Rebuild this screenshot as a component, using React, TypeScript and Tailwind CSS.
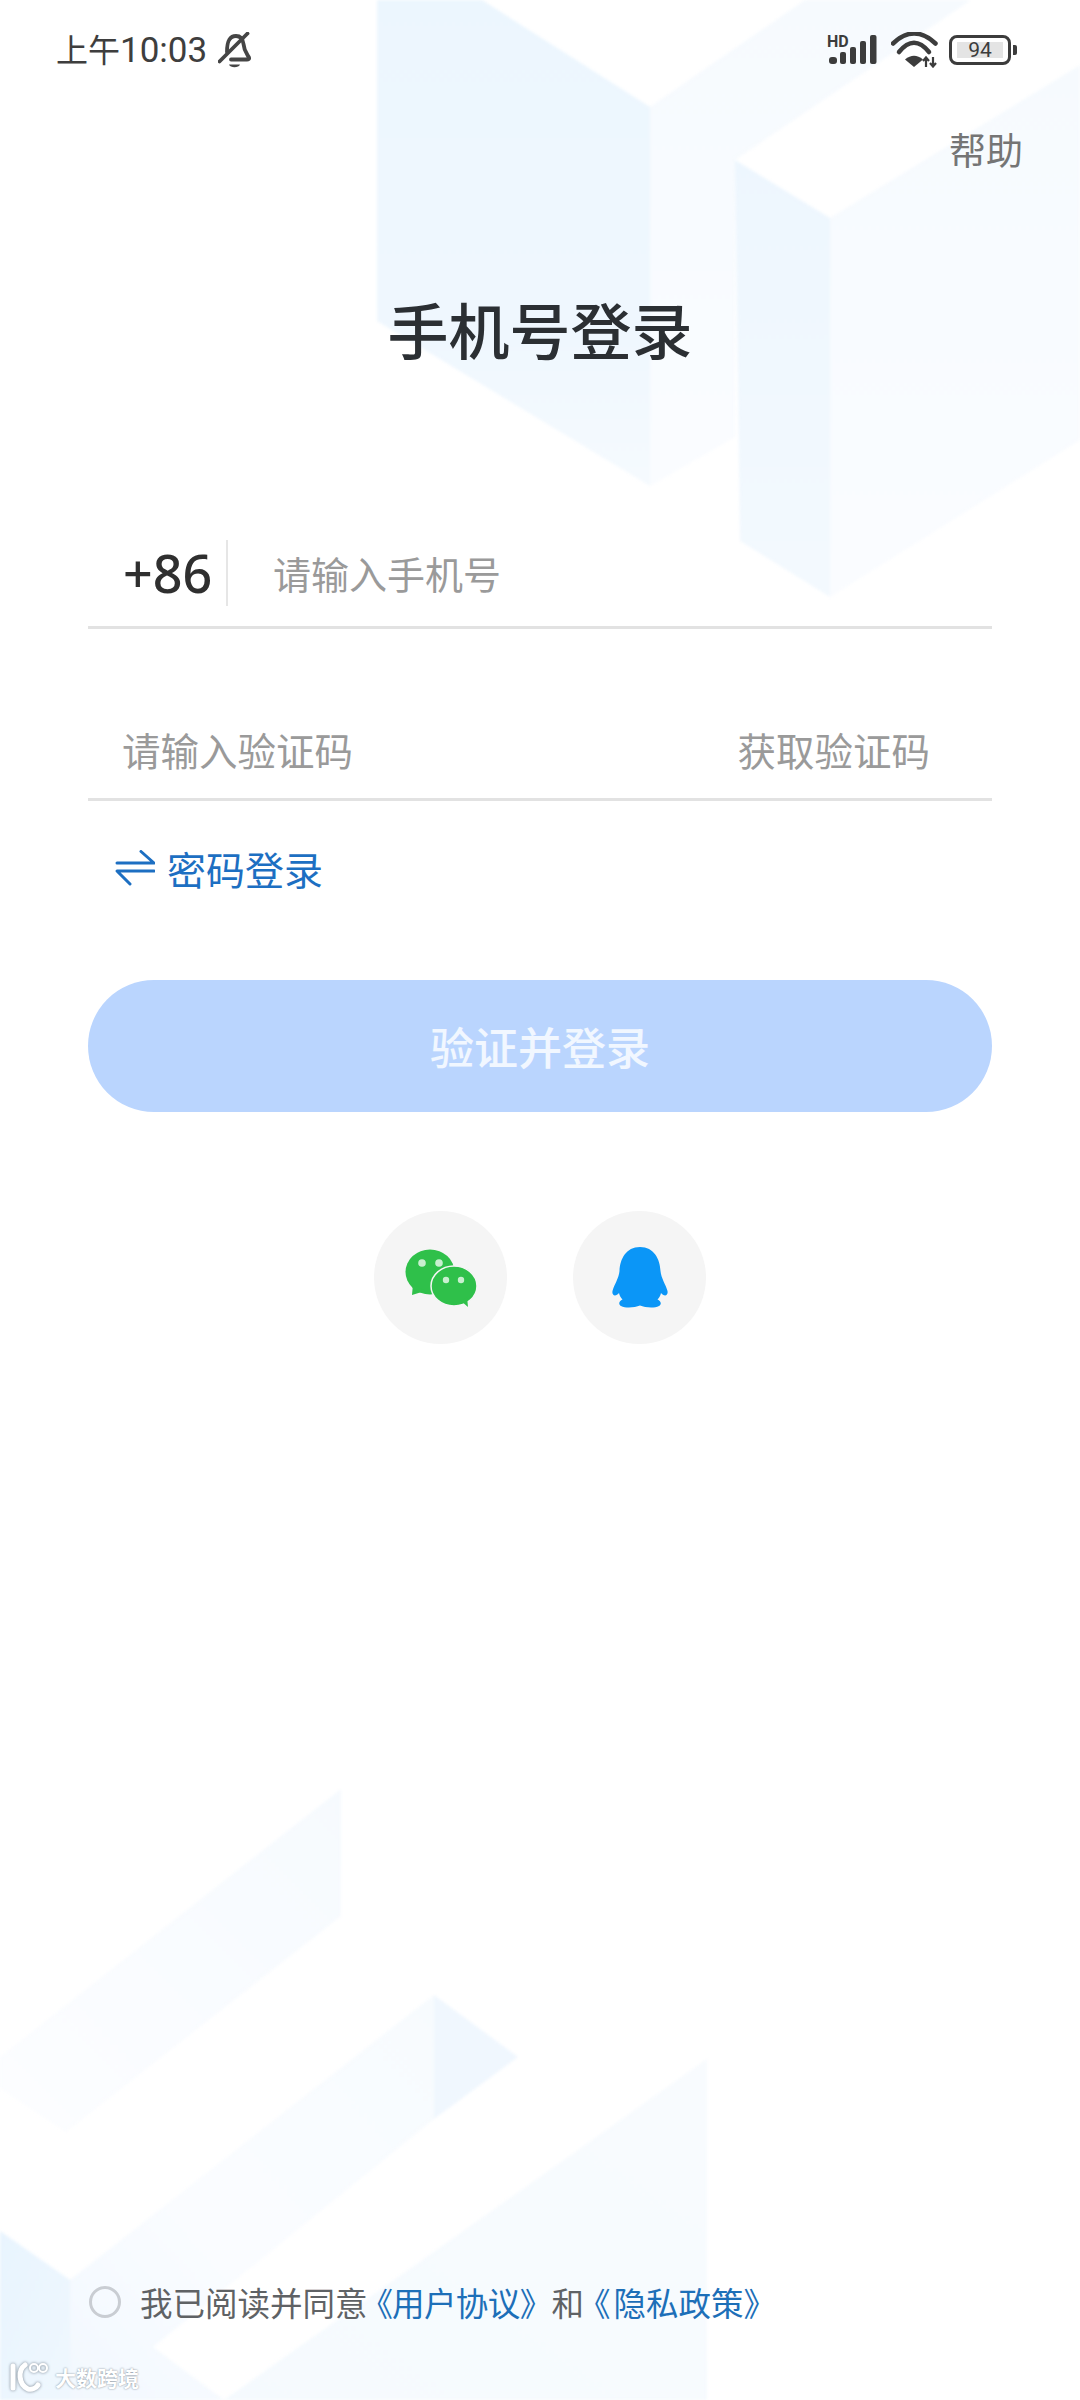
const cjk = "font-['Noto_Sans_CJK_SC','Noto_Sans',sans-serif]";

function Background() {
  return (
    <svg className="absolute inset-0 blur-[1.5px]" width="1080" height="2400" viewBox="0 0 1080 2400">
      <defs>
        <linearGradient id="bigLeft" x1="0" y1="0" x2="0" y2="1">
          <stop offset="0" stopColor="#ecf6fe" />
          <stop offset="0.7" stopColor="#eff7fe" />
          <stop offset="1" stopColor="#f5fafe" />
        </linearGradient>
        <linearGradient id="rightFace" x1="0" y1="0" x2="0" y2="1">
          <stop offset="0" stopColor="#f6fafe" />
          <stop offset="1" stopColor="#fafcff" />
        </linearGradient>
        <linearGradient id="cubeLeft" x1="0" y1="0" x2="0" y2="1">
          <stop offset="0" stopColor="#edf6fe" />
          <stop offset="1" stopColor="#f3f9fe" />
        </linearGradient>
        <linearGradient id="bottomA" x1="1" y1="0" x2="0" y2="1">
          <stop offset="0" stopColor="#f6fafe" />
          <stop offset="1" stopColor="#fcfdff" />
        </linearGradient>
        <linearGradient id="band" x1="1" y1="0" x2="0" y2="1">
          <stop offset="0" stopColor="#f7fbfe" />
          <stop offset="0.6" stopColor="#fafcff" />
          <stop offset="1" stopColor="#f2f8fe" />
        </linearGradient>
        <linearGradient id="bottomC" x1="0" y1="1" x2="1" y2="0">
          <stop offset="0" stopColor="#f5fafe" />
          <stop offset="1" stopColor="#f8fbfe" />
        </linearGradient>
        <linearGradient id="corner" x1="0" y1="0" x2="1" y2="1">
          <stop offset="0" stopColor="#e8f4fe" />
          <stop offset="1" stopColor="#eff7fe" />
        </linearGradient>
      </defs>
      {/* top cubes */}
      <polygon points="650,107 805,0 971,0 735,160 735,437 650,486" fill="url(#rightFace)" />
      <polygon points="377,0 482,0 650,107 650,486 377,321" fill="url(#bigLeft)" />
      <polygon points="830,218 1080,65 1080,440 830,597" fill="url(#rightFace)" />
      <polygon points="735,160 830,218 830,597 740,541" fill="url(#cubeLeft)" />
      {/* bottom cubes */}
      <polygon points="341,1789 341,1916 66,2132 0,2088 0,2057" fill="url(#bottomA)" />
      <polygon points="434,1995 434,2119 153,2347 224,2400 70,2400 70,2280" fill="url(#band)" />
      <polygon points="434,1995 518,2057 434,2119" fill="#f0f7fe" />
      <polygon points="0,2231 70,2280 70,2400 0,2400" fill="url(#corner)" />
      <polygon points="707,2059 707,2400 224,2400" fill="url(#bottomC)" />
    </svg>
  );
}

function BellOff() {
  return (
    <svg width="33" height="36" viewBox="0 0 33 36" fill="none" stroke="#454545" strokeWidth="3.800" strokeLinecap="round">
      <path d="M9 20C9 12 10 4 18 4C23 4 25 8 25.500 12C26 19 29 22 31 25.500C31.500 27 30.500 27.500 29 27.500H13" />
      <path d="M1.500 29.500L29.500 1.500" />
      <path d="M11 32.500H22C21 36 12 36 11 32.500Z" fill="#454545" stroke="none" />
    </svg>
  );
}

function Signal() {
  return (
    <svg width="54" height="34" viewBox="0 0 54 34" fill="#3c3c3c">
      <text x="0" y="14" fontSize="16" fontWeight="700" fontFamily="Roboto, sans-serif">HD</text>
      <rect x="2" y="24" width="8" height="7" rx="3" />
      <rect x="13" y="19" width="6" height="12" rx="2" />
      <rect x="23" y="14" width="6" height="17" rx="2" />
      <rect x="33" y="8" width="6" height="23" rx="2" />
      <rect x="43" y="2" width="6.500" height="29" rx="2" />
    </svg>
  );
}

function Wifi() {
  return (
    <svg width="48" height="36" viewBox="0 0 48 36" fill="none" stroke="#3c3c3c" strokeWidth="4.500" strokeLinecap="round">
      <path d="M2 11.500Q23 -8.500 44.500 11.500" />
      <path d="M8 20Q23 1.500 38 20" />
      <path d="M14 27.500Q23 20 32 27.500L23 35Z" fill="#3c3c3c" stroke="none" />
      <g strokeWidth="2.200" strokeLinecap="butt">
        <path d="M35 35V26M32 29L35 25.500L38 29" />
        <path d="M42 25V34M39 31L42 34.500L45 31" />
      </g>
    </svg>
  );
}

function Battery() {
  return (
    <div className="flex items-center gap-[2px]">
      <div className="flex h-[30px] w-[62px] items-center justify-center rounded-[8px] border-[3.500px] border-[#3c3c3c]">
        <div className="flex h-[16px] w-[46px] items-center justify-center bg-[#e4e4e4] font-['Roboto',sans-serif] text-[21px] leading-none text-[#3c3c3c]">
          94
        </div>
      </div>
      <div className="h-[10px] w-[4px] rounded-r-[2px] bg-[#3c3c3c]" />
    </div>
  );
}

function SwapArrows() {
  return (
    <svg width="40" height="36" viewBox="0 0 40 36" fill="none" stroke="#1d6fc2" strokeWidth="3" strokeLinecap="round" strokeLinejoin="round">
      <path d="M2 13H39L26 1.500" />
      <path d="M39 21H2L15 34" />
    </svg>
  );
}

function WeChat() {
  return (
    <svg width="72" height="58" viewBox="0 0 72 58">
      <ellipse cx="25" cy="23" rx="24.500" ry="22.500" fill="#2fc04a" />
      <path d="M8 35L7 46L20 42Z" fill="#2fc04a" />
      <ellipse cx="49" cy="37" rx="23" ry="20" fill="#2fc04a" stroke="#f5f5f5" strokeWidth="1.500" />
      <path d="M56 52L63 58L62 48Z" fill="#2fc04a" />
      <circle cx="17" cy="14" r="3.800" fill="#c9efd0" />
      <circle cx="34" cy="14" r="3.800" fill="#c9efd0" />
      <circle cx="41" cy="31" r="3.200" fill="#c9efd0" />
      <circle cx="56" cy="31" r="3.200" fill="#c9efd0" />
    </svg>
  );
}

function Penguin() {
  return (
    <svg width="56" height="61" viewBox="0 0 56 61" fill="#0b96f7">
      <path d="M28 0C42 0 48 12 48.500 24C49 31 54 38 55.500 44C56.500 49 52 50 49 46C48.500 49 47 51 45.500 52.500C49 54 50 57 47 59C42 61.500 33 60.500 28 58.500C23 60.500 14 61.500 9 59C6 57 7 54 10.500 52.500C9 51 7.500 49 7 46C4 50 -0.500 49 0.500 44C2 38 7 31 7.500 24C8 12 14 0 28 0Z" />
    </svg>
  );
}

function SocialButton({ children }: { children: React.ReactNode }) {
  return (
    <button className="flex h-[133px] w-[133px] items-center justify-center rounded-full bg-[#f5f5f5]">
      {children}
    </button>
  );
}

function WatermarkLogo() {
  return (
    <svg className="drop-shadow-[0_0_1.5px_#76828e]" width="40" height="34" viewBox="0 0 40 34" fill="none" stroke="#ffffff" strokeLinecap="round">
      <path d="M3 6V28" strokeWidth="5" />
      <path d="M15 5C8 10 8 24 18 29C22 30 26 28 28 25" strokeWidth="5" />
      <circle cx="24" cy="8" r="4" strokeWidth="2" />
      <circle cx="33" cy="8" r="4" strokeWidth="2" />
    </svg>
  );
}

export default function App() {
  return (
    <div className={`relative flex h-[2400px] w-[1080px] flex-col overflow-hidden bg-white ${cjk}`}>
      <Background />

      <div className="relative flex h-[100px] items-center justify-between pl-[56px] pr-[63px]">
        <div className="flex items-center gap-[11px]">
          <span className="text-[32px] leading-none text-[#3e3e3e]">
            上午<span className="font-['Roboto',sans-serif] text-[35px]">10:03</span>
          </span>
          <BellOff />
        </div>
        <div className="flex items-center gap-[10px]">
          <Signal />
          <Wifi />
          <Battery />
        </div>
      </div>

      <div className="relative mt-[29px] flex h-[40px] items-center justify-end pr-[57px] text-[37px] leading-none text-[#757575]">
        帮助
      </div>

      <h1 className="relative mt-[120px] h-[80px] text-center text-[61px] font-medium leading-[80px] text-[#2b2f33]">
        手机号登录
      </h1>

      <div className="relative mt-[150px] flex flex-col px-[88px]">
        <div className="flex h-[110px] items-center border-b-[3px] border-[#e2e2e2] pl-[35px]">
          <span className="w-[103px] font-['Noto_Sans',sans-serif] text-[52px] font-medium leading-none text-[#2f2f2f]">
            +86
          </span>
          <div className="h-[66px] w-[2px] bg-[#e6e6e6]" />
          <span className="ml-[45px] text-[38px] leading-none text-[#9a9a9a]">请输入手机号</span>
        </div>

        <div className="mt-[72px] flex h-[100px] items-center justify-between border-b-[3px] border-[#e2e2e2] pl-[34px] pr-[62px] text-[38.500px] leading-none text-[#9a9a9a]">
          <span>请输入验证码</span>
          <span>获取验证码</span>
        </div>

        <div className="mt-[42px] flex h-[50px] items-center gap-[12px] pl-[27px] text-[39px] leading-none text-[#1d6fc2]">
          <SwapArrows />
          <span>密码登录</span>
        </div>

        <button className="mt-[87px] flex h-[132px] w-full items-center justify-center rounded-full bg-[#bad5fe] text-[44px] font-medium leading-none text-white/80">
          验证并登录
        </button>

        <div className="mt-[99px] flex justify-center gap-[66px]">
          <SocialButton>
            <WeChat />
          </SocialButton>
          <SocialButton>
            <Penguin />
          </SocialButton>
        </div>
      </div>

      <div className="relative mt-auto mb-[78px] flex h-[40px] items-center pl-[89px] text-[32.500px] leading-none text-[#5f6265]">
        <div className="h-[32px] w-[32px] rounded-full border-[3px] border-[#c9cdd3]" />
        <span className="ml-[19px] whitespace-nowrap">
          我已阅读并同<span className="tracking-[-7px]">意</span>
          <span className="tracking-[-0.6px] text-[#1d6fb8]">
            <span className="tracking-[-1px]">《</span>用户协议》
          </span>
          <span className="tracking-[-6px]">和</span>
          <span className="text-[#1d6fb8]">
            <span className="tracking-[3px]">《</span>隐私政策》
          </span>
        </span>
      </div>

      <div className="absolute bottom-[6px] left-[10px] flex items-center gap-[5px] text-[21px] font-bold leading-none text-white [text-shadow:0_0_2px_#76828e]">
        <WatermarkLogo />
        <span>大数跨境</span>
      </div>
    </div>
  );
}
